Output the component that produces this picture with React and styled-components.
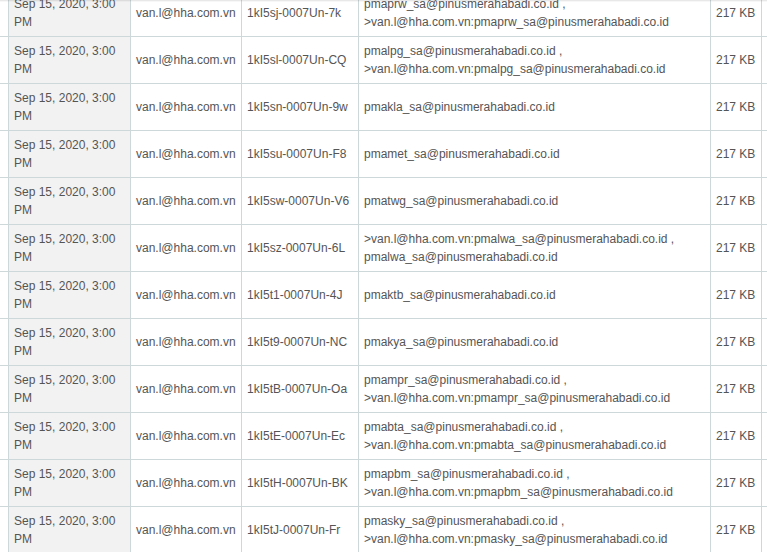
import React, { useLayoutEffect, useRef } from "react"
import styled, { createGlobalStyle } from "styled-components"

const GlobalStyle = createGlobalStyle`
  html, body {
    margin: 0;
    padding: 0;
    background: #fff;
    overflow: hidden;
  }
  body {
    font-family: "Liberation Sans", Arial, sans-serif;
  }
`

const columns = [30, 122, 111, 117, 352, 51, 120]

const rows = [
  ["1kI5sj-0007Un-7k", "pmaprw_sa@pinusmerahabadi.co.id , >van.l@hha.com.vn:pmaprw_sa@pinusmerahabadi.co.id"],
  ["1kI5sl-0007Un-CQ", "pmalpg_sa@pinusmerahabadi.co.id , >van.l@hha.com.vn:pmalpg_sa@pinusmerahabadi.co.id"],
  ["1kI5sn-0007Un-9w", "pmakla_sa@pinusmerahabadi.co.id"],
  ["1kI5su-0007Un-F8", "pmamet_sa@pinusmerahabadi.co.id"],
  ["1kI5sw-0007Un-V6", "pmatwg_sa@pinusmerahabadi.co.id"],
  ["1kI5sz-0007Un-6L", ">van.l@hha.com.vn:pmalwa_sa@pinusmerahabadi.co.id , pmalwa_sa@pinusmerahabadi.co.id"],
  ["1kI5t1-0007Un-4J", "pmaktb_sa@pinusmerahabadi.co.id"],
  ["1kI5t9-0007Un-NC", "pmakya_sa@pinusmerahabadi.co.id"],
  ["1kI5tB-0007Un-Oa", "pmampr_sa@pinusmerahabadi.co.id , >van.l@hha.com.vn:pmampr_sa@pinusmerahabadi.co.id"],
  ["1kI5tE-0007Un-Ec", "pmabta_sa@pinusmerahabadi.co.id , >van.l@hha.com.vn:pmabta_sa@pinusmerahabadi.co.id"],
  ["1kI5tH-0007Un-BK", "pmapbm_sa@pinusmerahabadi.co.id , >van.l@hha.com.vn:pmapbm_sa@pinusmerahabadi.co.id"],
  ["1kI5tJ-0007Un-Fr", "pmasky_sa@pinusmerahabadi.co.id , >van.l@hha.com.vn:pmasky_sa@pinusmerahabadi.co.id"],
]

const App = () => {
  const scrollRef = useRef(null)

  // the list is shown scrolled a little, as in the screenshot
  useLayoutEffect(() => {
    if (scrollRef.current) {
      scrollRef.current.scrollTop = 11
      scrollRef.current.scrollLeft = 22
    }
  }, [])

  return (
    <>
      <GlobalStyle />
      <Frame>
        <Viewport ref={scrollRef}>
          <Table>
            <colgroup>
              {columns.map((w, i) => (
                <Col key={i} $w={w} />
              ))}
            </colgroup>
            <tbody>
              {rows.map(([id, to]) => (
                <tr key={id}>
                  <Cell />
                  <Cell $shaded>Sep 15, 2020, 3:00 PM</Cell>
                  <Cell>van.l@hha.com.vn</Cell>
                  <Cell>{id}</Cell>
                  <Cell>{to}</Cell>
                  <Cell>217 KB</Cell>
                  <Cell />
                </tr>
              ))}
            </tbody>
          </Table>
        </Viewport>
      </Frame>
    </>
  )
}

export default App

const Frame = styled.div`
  position: relative;
  height: 100vh;

  &::before {
    content: "";
    position: absolute;
    z-index: 2;
    top: 0;
    left: 0;
    right: 0;
    height: 2px;
    background: linear-gradient(rgba(0, 0, 0, 0.12), rgba(0, 0, 0, 0));
  }
`

const Viewport = styled.div`
  height: 100%;
  overflow: hidden;
`

const Table = styled.table`
  table-layout: fixed;
  border-collapse: collapse;
  width: ${columns.reduce((a, b) => a + b, 0)}px;
  font-size: 12px;
  line-height: 18px;
  color: #555;
`

const Col = styled.col`
  width: ${(p) => p.$w}px;
`

const Cell = styled.td`
  height: 36px;
  padding: 5px 5px;
  border: 1px solid #cdd8da;
  vertical-align: middle;
  background: ${(p) => (p.$shaded ? "#f2f2f2" : "#fff")};
  overflow-wrap: break-word;
`
